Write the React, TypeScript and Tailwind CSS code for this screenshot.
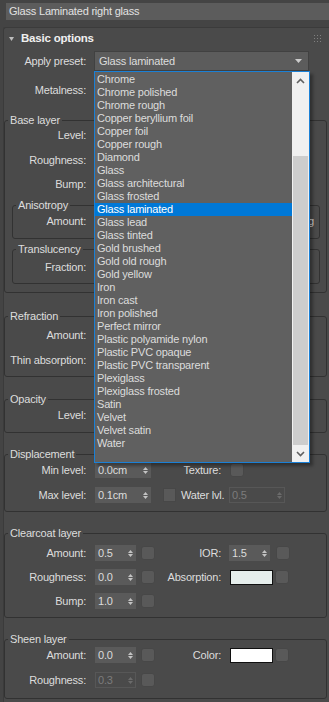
import React from "react";

const presets = [
  "Chrome",
  "Chrome polished",
  "Chrome rough",
  "Copper beryllium foil",
  "Copper foil",
  "Copper rough",
  "Diamond",
  "Glass",
  "Glass architectural",
  "Glass frosted",
  "Glass laminated",
  "Glass lead",
  "Glass tinted",
  "Gold brushed",
  "Gold old rough",
  "Gold yellow",
  "Iron",
  "Iron cast",
  "Iron polished",
  "Perfect mirror",
  "Plastic polyamide nylon",
  "Plastic PVC opaque",
  "Plastic PVC transparent",
  "Plexiglass",
  "Plexiglass frosted",
  "Satin",
  "Velvet",
  "Velvet satin",
  "Water",
];

function Arrows({ dim }: { dim?: boolean }) {
  return (
    <svg width="5" height="7" viewBox="0 0 5 7" className={dim ? "fill-[#6b6b6b]" : "fill-[#c4c4c4]"}>
      <path d="M2.5 0L5 3H0Z" />
      <path d="M0 4H5L2.5 7Z" />
    </svg>
  );
}

function Spin({ v, w = "w-[41px]", off }: { v: string; w?: string; off?: boolean }) {
  return (
    <div
      className={`${w} h-[16px] shrink-0 flex items-center justify-between ${
        off ? "border border-[#575757] text-[#7c7c7c] pl-[2px] pr-[2px]" : "bg-[#5a5a5a] text-[#dcdcdc] pl-[3px] pr-[3px]"
      }`}
    >
      <span>{v}</span>
      <Arrows dim={off} />
    </div>
  );
}

function MapBtn({ className = "" }: { className?: string }) {
  return <div className={`w-[14px] h-[14px] shrink-0 rounded-[3px] bg-[#595959] border border-[#474747] ${className}`} />;
}

function Swatch({ color }: { color: string }) {
  return <div className={`ml-[1px] w-[43px] h-[15px] border border-[#101010] ${color}`} />;
}

function Row({
  label,
  lw = "w-[81px]",
  className = "",
  children,
}: {
  label: string;
  lw?: string;
  className?: string;
  children?: React.ReactNode;
}) {
  return (
    <div className={`flex items-center h-[16px] ${className}`}>
      <span className={`${lw} shrink-0 text-right`}>{label}</span>
      <div className="ml-[9px] flex items-center flex-1">{children}</div>
    </div>
  );
}

function Group({
  title,
  className = "",
  children,
}: {
  title: string;
  className?: string;
  children?: React.ReactNode;
}) {
  return (
    <fieldset className={`border border-[#323232] rounded-[3px] ${className}`}>
      <legend className="ml-[3px] px-[2px] leading-[13px]">{title}</legend>
      {children}
    </fieldset>
  );
}

function Pair({ left, label, right }: { left: React.ReactNode; label?: string; right?: React.ReactNode }) {
  return (
    <>
      <div className="w-[60px] flex items-center shrink-0">{left}</div>
      {label && <span className="w-[66px] shrink-0 text-right">{label}</span>}
      {right && <div className="ml-[8px] flex items-center">{right}</div>}
    </>
  );
}

// open preset dropdown, drawn over the rollout
function PresetList() {
  return (
    <div className="absolute left-[94px] top-[71px] w-[216px] h-[392px] z-10 flex border border-[#1a80d6] bg-[#606060] shadow-[3px_3px_3px_rgba(0,0,0,0.35)]">
      <div className="flex-1 pt-[1px]">
        {presets.map((p) => (
          <div
            key={p}
            className={`h-[13px] leading-[13px] pl-[2px] whitespace-nowrap ${
              p === "Glass laminated" ? "bg-[#0078d7] text-white" : "text-[#dcdcdc]"
            }`}
          >
            {p}
          </div>
        ))}
      </div>
      <div className="w-[17px] bg-[#f0f0f0] flex flex-col">
        <div className="h-[17px] flex items-center justify-center">
          <svg width="9" height="6" viewBox="0 0 9 6" fill="none" stroke="#606060" strokeWidth="1.6">
            <path d="M1 5L4.5 1.5L8 5" />
          </svg>
        </div>
        <div className="flex-1 flex flex-col">
          <div className="mt-[67px] mx-[1px] flex-1 bg-[#cdcdcd]" />
        </div>
        <div className="h-[17px] flex items-center justify-center">
          <svg width="9" height="6" viewBox="0 0 9 6" fill="none" stroke="#606060" strokeWidth="1.6">
            <path d="M1 1L4.5 4.5L8 1" />
          </svg>
        </div>
      </div>
    </div>
  );
}

export default function App() {
  return (
    <div className="relative w-[329px] h-[702px] overflow-hidden bg-[#444444] text-[#dddddd] text-[11px] tracking-[-0.2px] font-['Liberation_Sans',Arial,sans-serif]">
      {/* Material name */}
      <div className="mt-[3px] ml-[6px] h-[17px] pl-[3px] leading-[17px] bg-[#5c5c5c] text-[#e2e2e2]">
        Glass Laminated right glass
      </div>

      {/* Rollout */}
      <div className="mt-[7px] ml-[3px] w-[330px] h-[700px] bg-[#4a4a4a] border-l border-t border-[#3b3b3b] rounded-tl-[3px]">
        {/* Header */}
        <div className="h-[21px] flex items-center justify-between pl-[5px] pr-[12px]">
          <div className="flex items-center">
            <svg width="5" height="4" viewBox="0 0 5 4" className="fill-[#bdbdbd]">
              <path d="M0 0H5L2.5 4Z" />
            </svg>
            <span className="ml-[7px] font-bold text-[#f0f0f0] text-[11.5px]">Basic options</span>
          </div>
          <svg width="7" height="7" viewBox="0 0 7 7" className="fill-[#808080]">
            {[0, 3, 6].map((y) =>
              [0, 3, 6].map((x) => <rect key={`${x}-${y}`} x={x} y={y} width="1" height="1" />)
            )}
          </svg>
        </div>

        {/* Apply preset */}
        <div className="mt-[2px] h-[20px] flex items-center">
          <span className="w-[82px] text-right">Apply preset:</span>
          <div className="ml-[8px] w-[215px] h-[20px] flex items-center justify-between pl-[4px] pr-[6px] bg-[#5c5c5c] border border-[#414141]">
            <span>Glass laminated</span>
            <svg width="7" height="4" viewBox="0 0 7 4" className="fill-[#cccccc]">
              <path d="M0 0H7L3.5 4Z" />
            </svg>
          </div>
        </div>

        {/* controls of these rows sit under the open list */}
        <Row label="Metalness:" lw="w-[82px]" className="mt-[11px]" />

        {/* Base layer */}
        <Group title="Base layer" className="mt-[16px] w-[323px] pb-[8px]">
          <Row label="Level:" />
          <Row label="Roughness:" className="mt-[9px]" />
          <Row label="Bump:" className="mt-[8px]" />
          <Group title="Anisotropy" className="mt-[7px] ml-[7px] w-[308px] pb-[9px]">
            <Row label="Amount:" lw="w-[73px]" className="mt-[1px]">
              <span className="ml-auto mr-[5px]">Mapping</span>
            </Row>
          </Group>
          <Group title="Translucency" className="mt-[4px] ml-[7px] w-[308px] pb-[8px]">
            <Row label="Fraction:" lw="w-[73px]" className="mt-[3px]" />
          </Group>
        </Group>

        {/* Refraction */}
        <Group title="Refraction" className="mt-[17px] w-[323px] pb-[8px]">
          <Row label="Amount:" className="mt-[4px]" />
          <Row label="Thin absorption:" className="mt-[9px]" />
        </Group>

        {/* Opacity */}
        <Group title="Opacity" className="mt-[16px] w-[323px] pb-[9px]">
          <Row label="Level:" className="mt-[1px]" />
        </Group>

        {/* Displacement */}
        <Group title="Displacement" className="mt-[15px] w-[323px] pb-[8px]">
          <Row label="Min level:" className="mt-[1px]">
            <Pair
              left={<Spin v="0.0cm" w="w-[56px]" />}
              label="Texture:"
              right={<MapBtn className="ml-[1px] h-[14px] w-[13px]" />}
            />
          </Row>
          <Row label="Max level:" className="mt-[9px]">
            <Spin v="0.1cm" w="w-[56px]" />
            <div className="ml-[12px] w-[13px] h-[14px] bg-[#595959] border border-[#474747]" />
            <span className="ml-[5px] w-[48px] shrink-0">Water lvl.</span>
            <Spin v="0.5" w="w-[56px]" off />
          </Row>
        </Group>

        {/* Clearcoat layer */}
        <Group title="Clearcoat layer" className="mt-[15px] w-[323px] pb-[8px]">
          <Row label="Amount:" className="mt-[5px]">
            <Pair
              left={
                <>
                  <Spin v="0.5" />
                  <MapBtn className="ml-[5px]" />
                </>
              }
              label="IOR:"
              right={
                <>
                  <Spin v="1.5" />
                  <MapBtn className="ml-[6px]" />
                </>
              }
            />
          </Row>
          <Row label="Roughness:" className="mt-[8px]">
            <Pair
              left={
                <>
                  <Spin v="0.0" />
                  <MapBtn className="ml-[5px]" />
                </>
              }
              label="Absorption:"
              right={
                <>
                  <Swatch color="bg-[#e6eeec]" />
                  <MapBtn className="ml-[2px]" />
                </>
              }
            />
          </Row>
          <Row label="Bump:" className="mt-[8px]">
            <Spin v="1.0" />
            <MapBtn className="ml-[5px]" />
          </Row>
        </Group>

        {/* Sheen layer */}
        <Group title="Sheen layer" className="mt-[15px] w-[323px] pb-[10px]">
          <Row label="Amount:" className="mt-[1px]">
            <Pair
              left={
                <>
                  <Spin v="0.0" />
                  <MapBtn className="ml-[5px]" />
                </>
              }
              label="Color:"
              right={
                <>
                  <Swatch color="bg-white" />
                  <MapBtn className="ml-[2px]" />
                </>
              }
            />
          </Row>
          <Row label="Roughness:" className="mt-[9px]">
            <Spin v="0.3" off />
            <MapBtn className="ml-[5px]" />
          </Row>
        </Group>
      </div>

      <PresetList />
    </div>
  );
}
